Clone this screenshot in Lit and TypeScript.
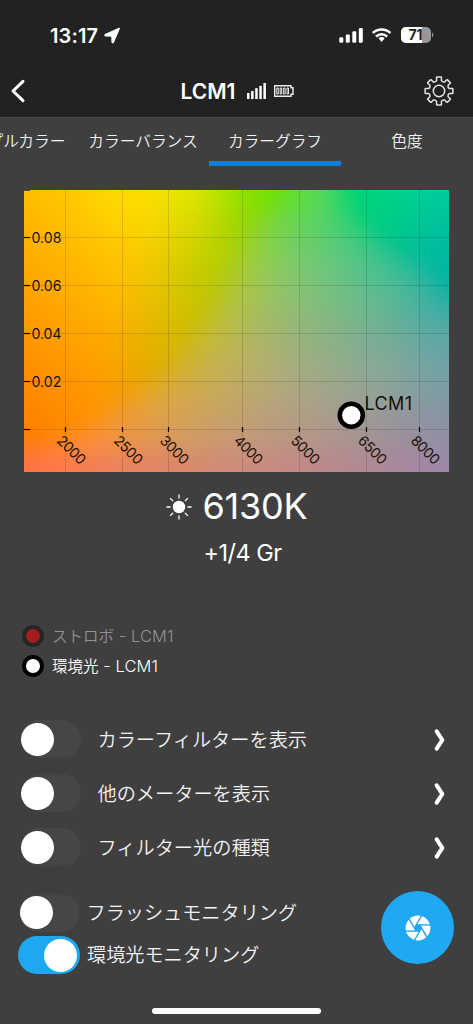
import { LitElement, html, css, svg } from "lit";
import { customElement, property } from "lit/decorators.js";

const W = 425;
const H = 282;

// Chromaticity channels on an even 11 x 9 grid, top row first. Values below 0
// or above 255 lie outside the display gamut and are clamped when drawn.
const grid = (rows: string[]) => rows.map((r) => r.split(" ").map(Number));
const RED = grid([
  "300 285 268 247 220 152 104 84 -69 -80 -100",
  "290 280 266 246 214 162 118 88 25 -70 -95",
  "285 275 262 240 204 168 134 108 76 30 -45",
  "280 272 258 234 202 176 148 124 102 76 28",
  "278 268 253 230 204 182 160 140 122 102 84",
  "275 266 251 227 204 190 172 154 140 124 110",
  "272 264 250 228 208 194 180 166 154 140 128",
  "270 260 244 224 208 198 186 176 164 154 144",
  "268 252 238 226 216 206 200 190 178 170 158",
]);
const GREEN = grid([
  "190 200 216 224 230 226 226 218 212 208 204",
  "180 192 206 214 216 214 212 208 206 200 192",
  "170 182 194 202 206 206 204 200 196 190 184",
  "160 172 184 192 198 196 194 192 188 182 176",
  "152 162 172 182 188 186 182 180 176 172 168",
  "142 154 162 174 178 176 174 172 170 166 162",
  "134 144 152 164 166 166 164 162 160 156 152",
  "124 138 146 152 156 154 152 150 148 144 144",
  "112 120 126 130 134 138 136 134 136 134 136",
]);
const BLUE = grid([
  "-150 -150 -150 -140 -120 -90 -25 88 122 142 160",
  "-150 -150 -145 -130 -105 -45 72 104 124 142 158",
  "-150 -145 -135 -115 -80 30 92 120 136 150 162",
  "-145 -135 -120 -95 -60 64 104 124 140 154 164",
  "-135 -120 -105 -75 15 80 112 130 143 156 166",
  "-120 -105 -80 -40 60 94 120 134 146 156 166",
  "-95 -80 -22 56 84 104 124 138 148 158 164",
  "-35 28 62 80 100 116 128 139 148 156 166",
  "70 80 92 104 110 124 132 138 148 160 170",
]);

const cubic = (a: number, b: number, c: number, d: number, t: number) =>
  b + 0.5 * t * (c - a + t * (2 * a - 5 * b + 4 * c - d + t * (3 * (b - c) + d - a)));

// Interpolates a channel in approximately linear light.
function sample(channel: number[][], u: number, v: number) {
  const rows = channel.length - 1;
  const cols = channel[0].length - 1;
  const x = Math.max(0, Math.min(cols, u));
  const y = Math.max(0, Math.min(rows, v));
  const i = Math.min(Math.floor(x), cols - 1);
  const j = Math.min(Math.floor(y), rows - 1);
  const at = (r: number, c: number) => {
    const n = channel[Math.max(0, Math.min(rows, r))][Math.max(0, Math.min(cols, c))];
    return n * Math.abs(n);
  };
  const line = (r: number) => cubic(at(r, i - 1), at(r, i), at(r, i + 1), at(r, i + 2), x - i);
  const s = cubic(line(j - 1), line(j), line(j + 1), line(j + 2), y - j);
  return Math.min(255, Math.sqrt(Math.max(0, s)));
}

// Averages nearby samples so the gamut boundary stays soft.
const SPREAD = [-0.32, -0.16, 0, 0.16, 0.32];
function soft(channel: number[][], u: number, v: number) {
  let sum = 0;
  for (const du of SPREAD) for (const dv of SPREAD) sum += sample(channel, u + du, v + dv);
  return Math.round(sum / 25);
}

const ROW_H = 2;
const STOPS = 50;
const FIELD = Array.from({ length: H / ROW_H }, (_, r) =>
  Array.from({ length: STOPS + 1 }, (_, s) => {
    const u = (s / STOPS) * 10;
    const v = ((r + 0.5) / (H / ROW_H)) * 8;
    return `rgb(${soft(RED, u, v)},${soft(GREEN, u, v)},${soft(BLUE, u, v)})`;
  })
);

const Y_LINES = [47.5, 95.5, 143.5, 191.5, 239.5];
const Y_LABELS = ["0.08", "0.06", "0.04", "0.02"];
const X_LINES: [number, string][] = [
  [41.5, "2000"], [98.5, "2500"], [144.5, "3000"], [218.5, "4000"],
  [275.5, "5000"], [342.5, "6500"], [395.5, "8000"],
];

@customElement("color-graph")
class ColorGraph extends LitElement {
  static styles = css`
    :host { display: block; }
    svg { display: block; }
    text { font-family: Inter, sans-serif; fill: #1a1208; }
    .tick { font-size: 14.2px; }
    .diag { font-size: 14.2px; letter-spacing: 0.1px; }
    .name { font-size: 18px; fill: #111; }
    .grid { stroke: #000; stroke-opacity: 0.13; }
    .mark { stroke: #000; stroke-width: 1.2; }
  `;
  render() {
    return html`<svg width=${W} height=${H} viewBox="0 0 ${W} ${H}">
      <defs>
        ${FIELD.map((row, i) => svg`<linearGradient id="row${i}">
          ${row.map((c, j) => svg`<stop offset=${j / STOPS} stop-color=${c} />`)}
        </linearGradient>`)}
      </defs>
      ${FIELD.map((_, i) => svg`<rect x="0" y=${i * ROW_H} width=${W} height=${ROW_H} fill="url(#row${i})" />`)}
      ${Y_LINES.map((y) => svg`<line class="grid" x1="0" x2=${W} y1=${y} y2=${y} /><line class="mark" x1="0" x2="6" y1=${y} y2=${y} />`)}
      <line class="mark" x1="0" x2="6" y1="0" y2="0" />
      ${Y_LABELS.map((t, i) => svg`<text class="tick" x="7.5" y=${Y_LINES[i] + 5} textLength="30">${t}</text>`)}
      ${X_LINES.map(([x, t]) => svg`<line class="grid" x1=${x} x2=${x} y1="0" y2=${H} />
        <line class="mark" x1=${x} x2=${x} y1="237" y2="242" />
        <text class="diag" transform="translate(${x - 9.5} 251.5) rotate(45)" textLength="34">${t}</text>`)}
      <circle cx="327.3" cy="225.3" r="11.5" fill="#fff" stroke="#000" stroke-width="4.6" />
      <text class="name" x="340.5" y="220" textLength="47.5">LCM1</text>
    </svg>`;
  }
}

@customElement("toggle-switch")
class ToggleSwitch extends LitElement {
  @property({ type: Boolean, reflect: true }) on = false;
  static styles = css`
    :host { display: flex; align-items: center; box-sizing: border-box; width: 60px; height: 38px; border-radius: 19px; background: #464646; padding: 0 0.4px; flex: none; }
    :host([on]) { width: 62px; background: #1da8f0; justify-content: flex-end; padding: 0 2.7px; }
    .knob { width: 33px; height: 33px; border-radius: 50%; background: #fff; }
  `;
  render() {
    return html`<div class="knob"></div>`;
  }
}

@customElement("app-root")
class AppRoot extends LitElement {
  static styles = css`
    :host { display: flex; flex-direction: column; box-sizing: border-box; width: 473px; height: 1024px; overflow: hidden; background: #3f3f3f; color: #fff; font-family: Inter, "Noto Sans CJK JP", sans-serif; }
    svg { display: block; flex: none; }
    header { background: #222; height: 118px; flex: none; border-bottom: 1px solid #4a4a4a; box-sizing: border-box; }
    .status { display: flex; align-items: center; height: 64px; padding: 6px 39px 0 50px; box-sizing: border-box; }
    .time { font-size: 20px; font-weight: 600; letter-spacing: 0.15px; width: 49px; white-space: nowrap; padding-top: 1px; }
    .arrow { margin-left: 5px; }
    .sys { margin-left: auto; }
    .bar { display: flex; align-items: center; justify-content: space-between; height: 54px; padding: 0 19px 0 10px; }
    .title { display: flex; align-items: center; font-size: 21px; font-weight: 600; padding-left: 20px; }
    .title span { width: 56px; letter-spacing: 0; white-space: nowrap; }
    .sig { margin-left: 10px; }
    .bat { margin-left: 8px; }
    nav { display: flex; flex: none; height: 47.5px; margin-left: -55px; font-size: 15.7px; font-weight: 350; }
    .tab { width: 132px; flex: none; box-sizing: border-box; text-align: center; line-height: 48px; border-bottom: 5px solid transparent; white-space: nowrap; color: #f2f2f2; height: 47.5px; }
    .tab.active { border-color: #0f7af5; }
    color-graph { margin: 24.5px 0 0 24px; height: 282px; flex: none; }
    .kelvin { display: flex; align-items: center; justify-content: center; gap: 10px; height: 44px; margin-top: 12px; padding-left: 1px; font-size: 36px; letter-spacing: -0.2px; }
    .kelvin svg { margin-top: 2px; }
    .tint { text-align: center; font-size: 23.5px; height: 30px; line-height: 30px; margin-top: 10px; padding-left: 12px; letter-spacing: -0.5px; }
    .legend { margin: 53px 0 0 22px; font-size: 15.5px; font-weight: 350; }
    .legend div { display: flex; align-items: center; height: 30px; gap: 8px; }
    .legend span { margin-top: -2px; }
    .legend em { font-style: normal; font-size: 16.4px; letter-spacing: 0.15px; white-space: pre; }
    .dim { color: #929292; }
    .dot { width: 14px; height: 14px; border: 4px solid #000; border-radius: 50%; background: #fff; }
    .dim .dot { background: #a31d1d; border-color: #252525; }
    .options { display: flex; flex-direction: column; margin-top: 31px; padding: 0 25px 0 21px; font-size: 19.2px; font-weight: 350; }
    .option { display: flex; align-items: center; height: 54px; }
    .option b { font-weight: inherit; margin-left: 16.5px; margin-right: auto; color: #f2f2f2; }
    .option svg { margin-top: 1px; }
    .foot { display: flex; align-items: flex-start; justify-content: space-between; margin-top: 17px; padding: 0 19px 0 18px; font-size: 19.15px; font-weight: 350; height: 120px; }
    .monitors { display: flex; flex-direction: column; padding-top: 0.5px; }
    .monitor { display: flex; align-items: center; height: 42.5px; gap: 7px; color: #f2f2f2; }
    .monitor span { margin-top: -2px; }
    .monitor toggle-switch:not([on]) { margin: 0 0 0 1.5px; }
    .shutter { display: flex; align-items: center; justify-content: center; width: 73px; height: 73px; border-radius: 50%; background: #1fa9f2; }
    .home { width: 169px; height: 6px; border-radius: 3px; background: #fff; margin: -3px auto 0; flex: none; }
  `;

  private option(label: string) {
    return html`<div class="option"><toggle-switch></toggle-switch><b>${label}</b>
      <svg width="16" height="26" viewBox="0 0 16 26"><path d="M4.7 4.3 L10.3 13 L4.7 21.7" fill="none" stroke="#fff" stroke-width="4.1" stroke-linecap="round" stroke-linejoin="round" /></svg>
    </div>`;
  }

  private gear() {
    let d = "";
    const n = 8;
    const at = (r: number, deg: number) => {
      const a = ((deg - 90) * Math.PI) / 180;
      return `${(15 + r * Math.cos(a)).toFixed(2)} ${(15 + r * Math.sin(a)).toFixed(2)}`;
    };
    for (let i = 0; i < n; i++) {
      const c = i * 45;
      d += `${i ? "L" : "M"}${at(10.7, c - 13)} L${at(13.6, c - 10.5)} Q${at(14.2, c - 9.5)} ${at(14, c - 7.5)} L${at(14, c + 7.5)} Q${at(14.2, c + 9.5)} ${at(13.6, c + 10.5)} L${at(10.7, c + 13)} Q${at(9.3, c + 22.5)} ${at(10.7, c + 32)} `;
    }
    return svg`<path d="${d}Z" /><circle cx="15" cy="15" r="5.7" />`;
  }

  render() {
    return html`
      <header>
        <div class="status">
          <div class="time">13:17</div>
          <svg class="arrow" width="17" height="17" viewBox="0 0 17 17"><path d="M15.2 1.4 L1.2 7.6 Q0.8 8.6 1.8 8.8 L8 9 L8.2 15 Q8.5 16 9.3 15.2 Z" fill="#fff" stroke="#fff" stroke-width="1.5" stroke-linejoin="round" /></svg>
          <svg class="sys" width="96" height="18" viewBox="0 0 96 18">
            <g fill="#fff">
              <rect x="1.3" y="11.3" width="4" height="5.4" rx="1.2" /><rect x="7.8" y="8.5" width="4" height="8.2" rx="1.2" />
              <rect x="14.3" y="5.3" width="4" height="11.4" rx="1.2" /><rect x="20.8" y="2" width="4" height="14.7" rx="1.2" />
              <path d="M40.5 12.3 a4.2 4.2 0 0 1 6.2 0 L43.6 16 Z" />
            </g>
            <path d="M34.8 7 a12.6 12.6 0 0 1 17.6 0 M38 10.6 a8 8 0 0 1 11.2 0" fill="none" stroke="#fff" stroke-width="2.5" />
            <clipPath id="pill"><rect x="63" y="1" width="30" height="16" rx="5" /></clipPath>
            <g clip-path="url(#pill)"><rect x="63" y="1" width="30" height="16" fill="#979797" /><rect x="63" y="1" width="21" height="16" fill="#fff" /></g>
            <path d="M94 6.5 a3 3 0 0 1 0 5 Z" fill="#979797" />
            <text x="77.5" y="14" font-size="14" font-weight="700" text-anchor="middle" fill="#222" letter-spacing="-0.2">71</text>
          </svg>
        </div>
        <div class="bar">
          <svg width="20" height="28" viewBox="0 0 20 28"><path d="M13 4.3 L3 14 L13 23.7" fill="none" stroke="#fff" stroke-width="3" stroke-linecap="round" stroke-linejoin="round" /></svg>
          <div class="title"><span>LCM1</span>
            <svg class="sig" width="19" height="18" viewBox="0 0 19 18" fill="#fff"><rect x="0" y="11" width="2.5" height="6" /><rect x="4.1" y="9" width="2.5" height="8" /><rect x="8.2" y="6.2" width="2.5" height="10.8" /><rect x="12.3" y="3.8" width="2.5" height="13.2" /><rect x="16.4" y="1" width="2.5" height="16" /></svg>
            <svg class="bat" width="20" height="12" viewBox="0 0 20 12" fill="none" stroke="#ececec"><path d="M.7 .7 H17 V2.7 H19 V9.3 H17 V11.3 H.7 Z" stroke-width="1.4" /><path d="M2.8 3 H4.3 V9 H2.8 Z M6.2 3 H7.7 V9 H6.2 Z M9.6 3 H11.1 V9 H9.6 Z M13 3 H14.5 V9 H13 Z" stroke-width="1" /></svg>
          </div>
          <svg width="30" height="30" viewBox="0 0 30 30" fill="none" stroke="#e4e4e4" stroke-width="1.5" stroke-linejoin="round">${this.gear()}</svg>
        </div>
      </header>
      <nav>
        <div class="tab">サンプルカラー</div><div class="tab">カラーバランス</div>
        <div class="tab active">カラーグラフ</div><div class="tab">色度</div>
      </nav>
      <color-graph></color-graph>
      <div class="kelvin">
        <svg width="26" height="26" viewBox="0 0 26 26"><circle cx="13" cy="13" r="6.2" fill="#fff" /><path d="M13 .5 V4.6 M13 21.4 V25.5 M.5 13 H4.6 M21.4 13 H25.5 M4.2 4.2 L7.1 7.1 M18.9 18.9 L21.8 21.8 M4.2 21.8 L7.1 18.9 M18.9 7.1 L21.8 4.2" stroke="#fff" stroke-width="1.3" /></svg>
        <span>6130K</span>
      </div>
      <div class="tint">+1/4 Gr</div>
      <div class="legend">
        <div class="dim"><i class="dot"></i><span>ストロボ<em> - LCM1</em></span></div>
        <div><i class="dot"></i><span>環境光<em> - LCM1</em></span></div>
      </div>
      <div class="options">
        ${["カラーフィルターを表示", "他のメーターを表示", "フィルター光の種類"].map((t) => this.option(t))}
      </div>
      <div class="foot">
        <div class="monitors">
          <div class="monitor"><toggle-switch></toggle-switch><span>フラッシュモニタリング</span></div>
          <div class="monitor"><toggle-switch on></toggle-switch><span>環境光モニタリング</span></div>
        </div>
        <div class="shutter">
          <svg width="26" height="26" viewBox="0 0 26 26"><circle cx="13" cy="13" r="12.4" fill="#fff" />
            <g stroke="#1fa9f2" stroke-width="1.4" fill="none">
              ${[0, 60, 120, 180, 240, 300].map((a) => svg`<path transform="rotate(${a} 13 13)" d="M11.2 9.9 H26" />`)}
            </g>
            <path d="M11.2 9.9 H14.8 L16.6 13 L14.8 16.1 H11.2 L9.4 13 Z" fill="#1fa9f2" />
          </svg>
        </div>
      </div>
      <div class="home"></div>
    `;
  }
}
